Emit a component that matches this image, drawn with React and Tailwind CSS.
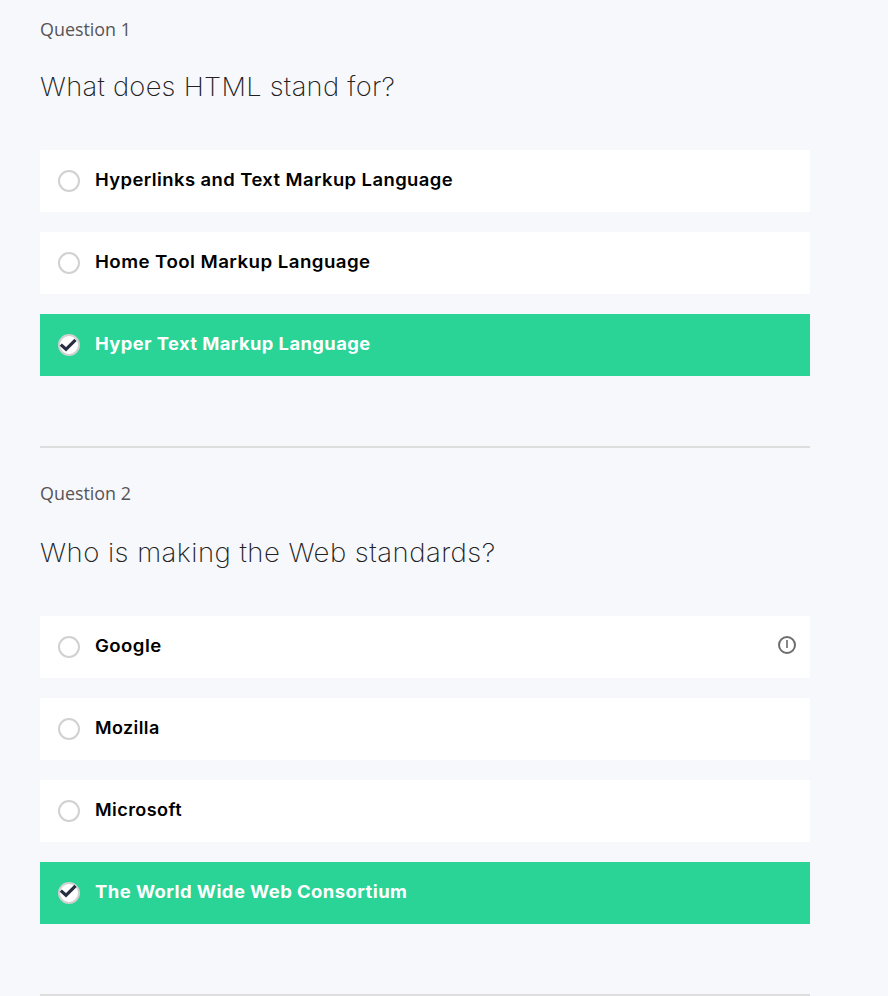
const questions = [
  {
    label: "Question 1",
    title: "What does HTML stand for?",
    titleClass: "scale-x-[1.05] tracking-[0.26px]",
    spacing: "pt-[17px]",
    gap: "mt-[29px]",
    options: [
      { text: "Hyperlinks and Text Markup Language", fit: "scale-x-[1.066]" },
      { text: "Home Tool Markup Language", fit: "scale-x-[1.082]" },
      { text: "Hyper Text Markup Language", fit: "scale-x-[1.061]", check: "M2.8 10.6 8 15.3 17.5 5.8" },
    ],
  },
  {
    label: "Question 2",
    title: "Who is making the Web standards?",
    titleClass: "scale-x-[1.06] tracking-[0.42px]",
    spacing: "pt-[33px]",
    gap: "mt-[31px]",
    options: [
      { text: "Google", fit: "scale-x-[1.075]", info: true },
      { text: "Mozilla", fit: "scale-x-[1.04]" },
      { text: "Microsoft", fit: "scale-x-[1.045]" },
      { text: "The World Wide Web Consortium", fit: "scale-x-[1.068]", check: "M2.8 8.6 8 13.3 17.5 3.8" },
    ],
  },
];

function Radio({ check }) {
  return (
    <svg className="size-[22px] shrink-0" viewBox="0 0 22 22" fill="none">
      <circle cx="11" cy="11" r="10" fill="#fff" stroke="#d1d1d1" strokeWidth="2" />
      {check && <path d={check} stroke="#272e42" strokeWidth="3.2" />}
    </svg>
  );
}

function InfoIcon() {
  return (
    <svg className="mb-[4px] ml-auto size-[18px]" viewBox="0 0 18 18" fill="none" stroke="#6d6d6d">
      <circle cx="9" cy="9" r="8" strokeWidth="2" />
      <path d="M9 4v8" stroke="#7a7a7a" strokeWidth="1.8" />
    </svg>
  );
}

function Option({ text, fit, check, info }) {
  return (
    <li className={`flex h-[62px] items-center pr-[14px] pl-[18px] ${check ? "bg-[#2ad396] text-white" : "bg-white text-black"}`}>
      <Radio check={check} />
      <span className={`mb-[2px] ml-[15px] origin-left text-[17.3px] leading-[24px] tracking-[0.4px] whitespace-nowrap ${check ? "font-bold" : "font-semibold"} ${fit}`}>
        {text}
      </span>
      {info && <InfoIcon />}
    </li>
  );
}

export default function App() {
  return (
    <main className="h-[996px] overflow-hidden bg-[#f7f8fc] pl-[40px] font-['Inter',sans-serif]">
      {questions.map((q) => (
        <section key={q.label} className={`w-[770px] border-b-2 border-[#dddddd] pb-[70px] ${q.spacing}`}>
          <p className="font-['Open_Sans',sans-serif] text-[17.9px] leading-[24px] text-[#555]">{q.label}</p>
          <h2 className={`origin-left text-[26px] leading-[34px] font-extralight whitespace-nowrap text-[#222] ${q.gap} ${q.titleClass}`}>
            {q.title}
          </h2>
          <ul className="mt-[46px] flex flex-col gap-[20px]">
            {q.options.map((option) => (
              <Option key={option.text} {...option} />
            ))}
          </ul>
        </section>
      ))}
    </main>
  );
}
